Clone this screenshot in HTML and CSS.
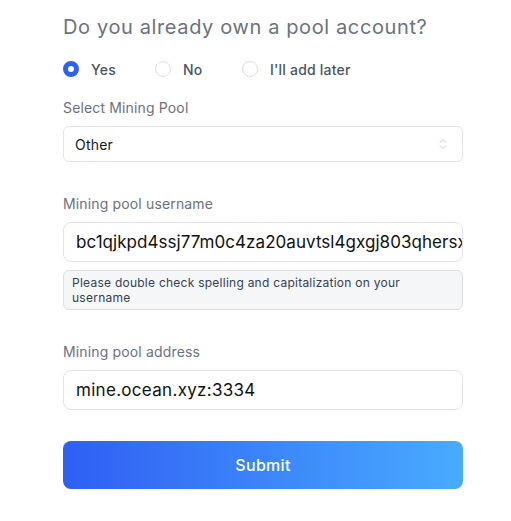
FILE: index.html
```html
<!DOCTYPE html>
<html>
<head>
<meta charset="utf-8">
<link rel="stylesheet" href="styles.css">
</head>
<body>
<form class="form">
  <h2 class="title">Do you already own a pool account?</h2>
  <div class="radios">
    <label class="radio"><span class="dot dot-on"></span><span>Yes</span></label>
    <label class="radio"><span class="dot"></span><span>No</span></label>
    <label class="radio"><span class="dot"></span><span>I'll add later</span></label>
  </div>
  <div class="field field-select">
    <div class="label">Select Mining Pool</div>
    <div class="select">
      <span>Other</span>
      <svg class="chev" width="8" height="12" viewBox="0 0 8 12" fill="none" stroke="#c4c9d1" stroke-width="1" stroke-linecap="round" stroke-linejoin="round"><path d="M1 4.5 L4 1.5 L7 4.5"/><path d="M1 7.5 L4 10.5 L7 7.5"/></svg>
    </div>
  </div>
  <div class="field field-user">
    <div class="label">Mining pool username</div>
    <div class="input">bc1qjkpd4ssj77m0c4za20auvtsl4gxgj803qhersx</div>
    <div class="hint"><span class="hint-text">Please double check spelling and capitalization on your username</span></div>
  </div>
  <div class="field field-addr">
    <div class="label">Mining pool address</div>
    <div class="input">mine.ocean.xyz:3334</div>
  </div>
  <button type="button" class="submit">Submit</button>
</form>
</body>
</html>
```
FILE: styles.css
```css
html, body { margin: 0; padding: 0; background: #fff; }
body { font-family: Inter, "Open Sans", sans-serif; }
.form { width: 400px; margin-left: 63px; display: flex; flex-direction: column; }
.title { margin: 14px 0 0; font-size: 20px; font-weight: 400; line-height: 26px; color: #6b7280; letter-spacing: 0.62px; }
.radios { display: flex; margin-top: 19px; height: 20px; align-items: center; }
.radio { display: flex; align-items: center; gap: 12px; font-size: 14px; font-weight: 500; color: #4b5563; letter-spacing: 0.2px; }
.radio:nth-child(1) { width: 92px; }
.radio:nth-child(2) { width: 87px; }
.dot { width: 14px; height: 14px; border: 1px solid #d9dde3; border-radius: 50%; box-sizing: content-box; }
.dot-on { width: 6px; height: 6px; border: 5px solid #2f62f3; background: #fff; }
.field { display: flex; flex-direction: column; }
.label { font-size: 14px; line-height: 20px; color: #6b7280; letter-spacing: 0.15px; }
.field-select { margin-top: 19px; }
.field-select .label { margin-bottom: 8px; }
.select { height: 34px; border: 1px solid #e1e4e8; border-radius: 6px; display: flex; align-items: center; justify-content: space-between; padding: 0 15px 0 11px; font-size: 14px; color: #111827; letter-spacing: 0.2px; }
.chev { display: block; }
.field-user { margin-top: 32px; }
.field-user .label, .field-addr .label { margin-bottom: 8px; }
.input { height: 38px; border: 1px solid #e1e4e8; border-radius: 8px; padding-left: 12px; font-size: 17px; line-height: 38px; color: #111; white-space: nowrap; overflow: hidden; letter-spacing: 0.3px; }
.field-user .input { letter-spacing: 0.05px; }
.hint { margin-top: 8px; background: #f5f6f8; border: 1px solid #dcdfe4; border-radius: 6px; padding: 4px 8px 4px; font-size: 12px; line-height: 15px; color: #374151; }
.hint-text { display: block; max-width: 345px; letter-spacing: 0.25px; }
.field-addr { margin-top: 32px; }
.submit { margin-top: 31px; height: 48px; border: 0; border-radius: 8px; background: linear-gradient(90deg, #2f5ff4 0%, #48abff 100%); color: #fff; font-family: inherit; font-size: 16px; font-weight: 500; cursor: pointer; letter-spacing: 0.3px; }
```
